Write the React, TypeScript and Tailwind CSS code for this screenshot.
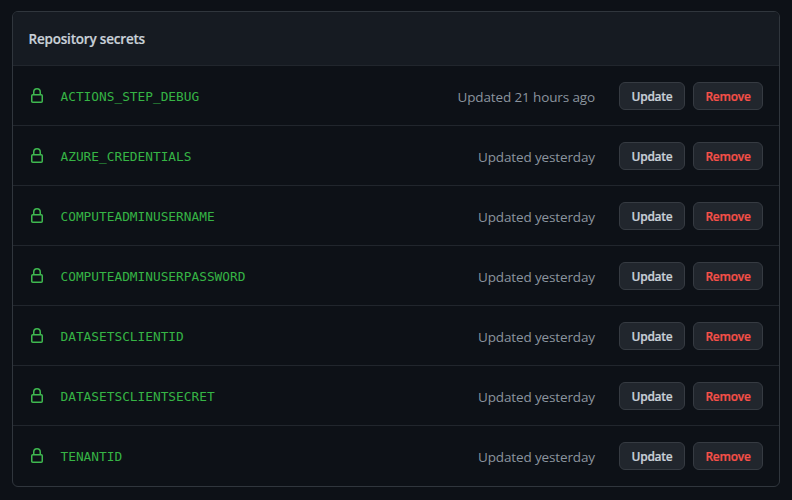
type Secret = { name: string; updated: string };

const secrets: Secret[] = [
  { name: "ACTIONS_STEP_DEBUG", updated: "Updated 21 hours ago" },
  { name: "AZURE_CREDENTIALS", updated: "Updated yesterday" },
  { name: "COMPUTEADMINUSERNAME", updated: "Updated yesterday" },
  { name: "COMPUTEADMINUSERPASSWORD", updated: "Updated yesterday" },
  { name: "DATASETSCLIENTID", updated: "Updated yesterday" },
  { name: "DATASETSCLIENTSECRET", updated: "Updated yesterday" },
  { name: "TENANTID", updated: "Updated yesterday" },
];

function LockIcon() {
  return (
    <svg width="16" height="16" viewBox="0 0 16 16" fill="#3fb950" fillRule="evenodd" className="shrink-0">
      <path d="M4 4v2h-.25A1.75 1.75 0 002 7.75v5.5c0 .966.784 1.75 1.75 1.75h8.5A1.75 1.75 0 0014 13.25v-5.5A1.75 1.75 0 0012.25 6H12V4a4 4 0 10-8 0zm6.5 2V4a2.5 2.5 0 10-5 0v2h5zM12 7.5h.25a.25.25 0 01.25.25v5.5a.25.25 0 01-.25.25h-8.5a.25.25 0 01-.25-.25v-5.5a.25.25 0 01.25-.25H12z" />
    </svg>
  );
}

const button =
  "flex h-7 items-center justify-center rounded-md border border-[#363b42] bg-[#21262d] pt-0.5 text-[12px] font-semibold tracking-[-0.25px] [-webkit-text-stroke:0.2px]";

function SecretRow({ name, updated }: Secret) {
  return (
    <li className="flex h-[60px] items-center border-t border-[#21262d] pr-4 pl-4">
      <LockIcon />
      <span className="mt-0.5 ml-[15.5px] font-['DejaVu_Sans_Mono',monospace] text-[12.8px] leading-5 text-[#36b445]">
        {name}
      </span>
      <span className="mt-0.5 ml-auto text-[13.5px] leading-5 tracking-[-0.13px] whitespace-nowrap text-[#8b949e]">
        {updated}
      </span>
      <button className={`${button} ml-6 w-[66px] text-[#c9d1d9]`}>Update</button>
      <button className={`${button} ml-2 w-[70px] text-[#f85149]`}>Remove</button>
    </li>
  );
}

export default function App() {
  return (
    <main className="h-[500px] w-[792px] bg-[#0d1117] pt-[11px] pl-3 font-['Open_Sans','Noto_Sans',sans-serif]">
      <section className="h-[476px] w-[768px] overflow-hidden rounded-md border border-[#30363d]">
        <h2 className="flex h-[53px] items-center bg-[#161b22] pt-0.5 pl-[15.5px] text-[13.5px] font-semibold tracking-[-0.2px] text-[#c9d1d9] [-webkit-text-stroke:0.2px]">
          Repository secrets
        </h2>
        <ul>
          {secrets.map((secret) => (
            <SecretRow key={secret.name} {...secret} />
          ))}
        </ul>
      </section>
    </main>
  );
}
